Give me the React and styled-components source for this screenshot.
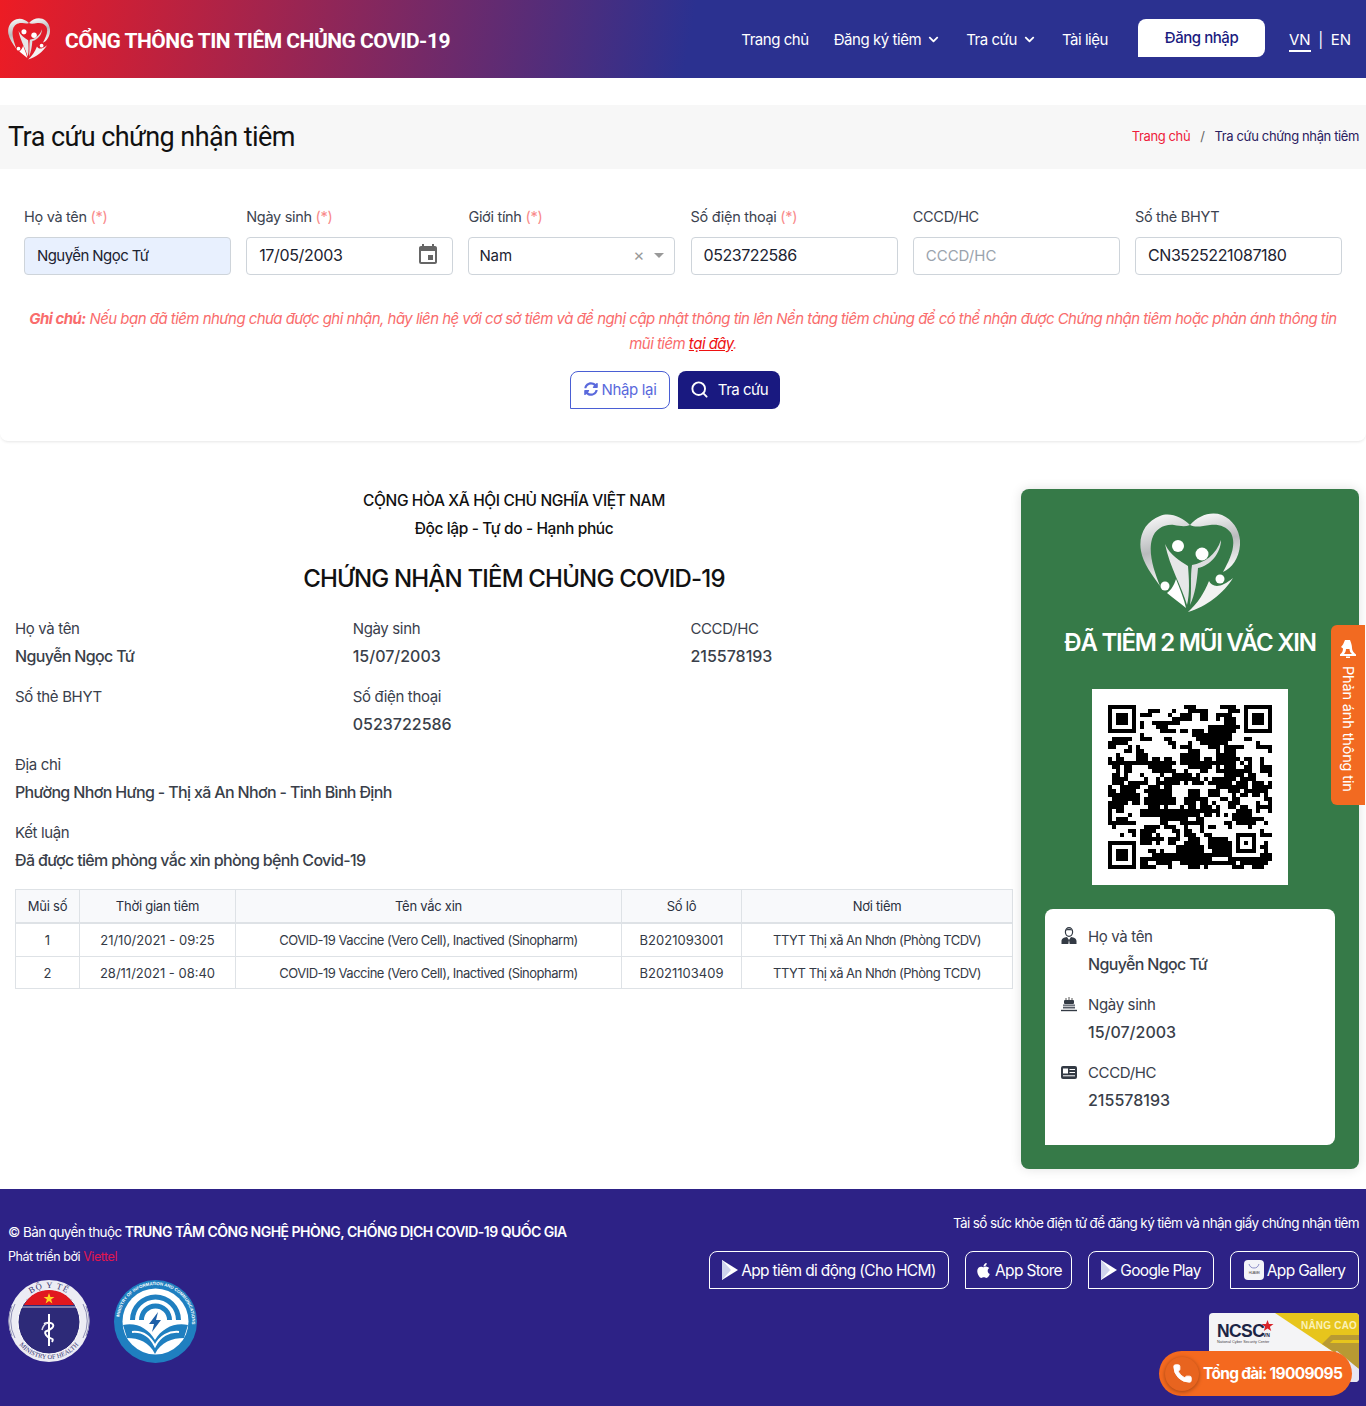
import { useMemo } from "react";
import styled, { createGlobalStyle } from "styled-components";
import { FaChevronDown, FaApple, FaSyncAlt } from "react-icons/fa";
import { MdEvent } from "react-icons/md";
import { Search, Phone } from "lucide-react";

const GlobalStyle = createGlobalStyle`
  html, body { margin: 0; padding: 0; background: #fff; }
  body { font-family: Inter, "Liberation Sans", sans-serif; color: #212529; }
  * { box-sizing: border-box; }
`;

const Page = styled.div`
  width: 1366px;
  min-height: 1406px;
`;

/* header */
const Header = styled.header`
  height: 78px;
  display: flex;
  align-items: center;
  justify-content: space-between;
  padding: 0 15px 0 8px;
  background: linear-gradient(100deg, #ed1c24 0%, #2b3190 50.5%, #2b3190 100%);
  color: #fff;
`;

const Brand = styled.div`
  display: flex;
  align-items: center;
  gap: 15px;
  font-family: Roboto, sans-serif;
  font-weight: 700;
  font-size: 21px;
  letter-spacing: -0.5px;
`;

const BrandName = styled.span`
  padding-top: 3px;
`;

const Nav = styled.nav`
  display: flex;
  align-items: center;
  font-size: 15px;
  letter-spacing: -0.45px;
`;

const NavItem = styled.a`
  display: flex;
  align-items: center;
  gap: 7px;
  margin-right: ${(p) => p.$gap}px;
  white-space: nowrap;
`;

const LoginButton = styled.button`
  width: 127px;
  height: 38px;
  margin: 0 24px 2px 0;
  border: 0;
  border-radius: 8px 8px 8px 0;
  background: #fff;
  color: #1b1b80;
  font: 500 15px Inter, sans-serif;
  letter-spacing: -0.45px;
  padding-bottom: 3px;
`;

const Lang = styled.div`
  display: flex;
  gap: 7.5px;
  font-size: 15px;
  letter-spacing: 0;
  align-items: center;
`;

const LangActive = styled.span`
  border-bottom: 2px solid #fff;
  padding-bottom: 1px;
  margin-top: 3px;
`;

/* breadcrumb bar */
const TitleBar = styled.div`
  margin-top: 27px;
  height: 64px;
  background: #f7f7f7;
  display: flex;
  align-items: center;
  justify-content: space-between;
  padding: 0 7px 0 8px;
`;

const PageTitle = styled.h1`
  margin: 0;
  font-family: Roboto, sans-serif;
  font-weight: 400;
  font-size: 27px;
  letter-spacing: -0.55px;
  color: #111;
`;

const Crumbs = styled.div`
  display: flex;
  gap: 10px;
  padding-bottom: 2px;
  font-size: 13px;
  letter-spacing: -0.38px;
  color: #2a2060;
`;

const CrumbLink = styled.a`
  color: #ee1c3a;
`;

const CrumbSep = styled.span`
  color: #666;
`;

/* search form */
const FormCard = styled.section`
  padding: 37px 24px 32px;
  background: #fff;
  border-radius: 0 0 8px 8px;
  box-shadow: 0 2px 3px -1px rgba(0, 0, 0, 0.1);
`;

const FieldGrid = styled.div`
  display: grid;
  grid-template-columns: repeat(6, 207px);
  column-gap: 15.2px;
`;

const FieldLabel = styled.label`
  display: block;
  height: 22px;
  line-height: 22px;
  margin-bottom: 9px;
  font-size: 14.5px;
  letter-spacing: -0.3px;
  color: #3c4350;
`;

const Required = styled.span`
  color: #f98a8a;
`;

const InputBox = styled.div`
  height: 38px;
  display: flex;
  align-items: center;
  justify-content: space-between;
  padding: 0 ${(p) => (p.$select ? 10 : 12)}px 2px;
  border: 1px solid #ced4da;
  border-radius: 4px;
  background: ${(p) => (p.$filled ? "#e8f0fe" : "#fff")};
  font-size: ${(p) => p.$size}px;
  letter-spacing: ${(p) => p.$ls}px;
  color: ${(p) => (p.$muted ? "#9aa3ad" : "#1c2230")};
`;

const SelectControls = styled.div`
  display: flex;
  align-items: center;
  gap: 10px;
  color: #999;
  font-size: 17px;
`;

const Caret = styled.span`
  width: 0;
  height: 0;
  border-left: 5px solid transparent;
  border-right: 5px solid transparent;
  border-top: 5px solid #999;
`;

const Note = styled.p`
  margin: 31px 0 15px;
  font-style: italic;
  font-size: 15px;
  line-height: 25px;
  letter-spacing: -0.54px;
  text-align: center;
  color: #f96c6c;
`;

const NoteLink = styled.a`
  color: #ee1111;
  text-decoration: underline;
`;

const FormActions = styled.div`
  display: flex;
  justify-content: center;
  gap: 8px;
  padding-right: 16px;
`;

const ResetButton = styled.button`
  width: 100px;
  height: 38px;
  display: flex;
  align-items: center;
  justify-content: center;
  gap: 4px;
  padding: 0 0 2px;
  background: #fff;
  border: 1px solid #4a5ed4;
  border-radius: 8px 8px 8px 0;
  color: #5a69dc;
  font: 400 15px Inter, sans-serif;
  letter-spacing: -0.35px;
`;

const SubmitButton = styled.button`
  width: 102px;
  height: 38px;
  display: flex;
  align-items: center;
  justify-content: center;
  gap: 9px;
  padding: 0 0 2px;
  background: #191980;
  border: 0;
  border-radius: 8px 8px 8px 0;
  color: #fff;
  font: 400 15px Inter, sans-serif;
  letter-spacing: -0.5px;
`;

/* certificate */
const Main = styled.main`
  display: flex;
  align-items: flex-start;
  padding-top: 45px;
`;

const Certificate = styled.div`
  width: 1021px;
  padding: 0 8px 0 15px;
`;

const Motto = styled.div`
  height: 28px;
  line-height: 30px;
  font-size: 15.5px;
  font-weight: 500;
  letter-spacing: -0.38px;
  text-align: center;
  color: #111;
`;

const CertTitle = styled.h2`
  height: 40px;
  margin: 16px 0;
  line-height: 42px;
  font-size: 24px;
  font-weight: 500;
  letter-spacing: -0.82px;
  text-align: center;
  color: #111;
`;

const CertGrid = styled.div`
  display: grid;
  grid-template-columns: repeat(3, 337.7px);
  row-gap: 12px;
`;

const CertField = styled.div`
  grid-column: ${(p) => (p.$wide ? "1 / -1" : "auto")};
`;

const InfoLabel = styled.div`
  height: 28px;
  line-height: 30px;
  font-size: 15px;
  letter-spacing: -0.35px;
  color: #3a404c;
`;

const InfoValue = styled.div`
  line-height: 28px;
  min-height: 28px;
  font-size: 16px;
  font-weight: 500;
  letter-spacing: ${(p) => (p.$num ? "0" : "-0.65px")};
  color: #3a3f4a;
`;

const DoseTable = styled.table`
  width: 997px;
  margin-top: 15px;
  border-collapse: collapse;
  table-layout: fixed;
  font-size: 13px;
  color: #343a46;
  text-align: center;
`;

const HeadCell = styled.th`
  height: 33px;
  width: ${(p) => p.$w}px;
  border: 1px solid #dee2e6;
  border-bottom: 2px solid #dee2e6;
  background: #f8f9fb;
  font-weight: 400;
  letter-spacing: -0.25px;
  color: #2b3040;
`;

const BodyCell = styled.td`
  height: 33px;
  border: 1px solid #dee2e6;
  padding: 0;
  letter-spacing: ${(p) => (p.$num ? "0" : "-0.5px")};
  tr:first-child & {
    height: 34px;
  }
  tr:last-child & {
    height: 32px;
  }
`;

/* green summary panel */
const Panel = styled.aside`
  width: 338px;
  height: 680px;
  margin-top: 3px;
  padding: 24px;
  display: flex;
  flex-direction: column;
  align-items: center;
  border-radius: 8px;
  background: #367a48;
  box-shadow: 0 0 12px rgba(0, 0, 0, 0.12);
  color: #fff;
`;

const PanelTitle = styled.h3`
  margin: 13px 0 29px;
  line-height: 34px;
  font-size: 24px;
  font-weight: 600;
  letter-spacing: -1.25px;
  white-space: nowrap;
`;

const QrFrame = styled.div`
  width: 196px;
  height: 196px;
  padding: 16px;
  background: #fff;
`;

const PersonCard = styled.div`
  width: 290px;
  margin-top: 24px;
  padding: 13px 16px 31px;
  display: flex;
  flex-direction: column;
  gap: 12px;
  border-radius: 8px 8px 8px 0;
  background: #fff;
`;

const PersonRow = styled.div`
  display: grid;
  grid-template-columns: 16px 1fr;
  column-gap: 11px;
`;

const PersonIcon = styled.div`
  height: 28px;
  display: flex;
  align-items: center;
  justify-content: center;
  color: #333a44;
`;

/* footer */
const Footer = styled.footer`
  margin-top: 20px;
  height: 217px;
  padding: 24px 7px 0 8px;
  display: flex;
  justify-content: space-between;
  background: #2d2286;
  color: #fff;
`;

const FooterLeft = styled.div`
  padding-top: 9px;
`;

const Copyright = styled.div`
  line-height: 20px;
  font-size: 13.5px;
  letter-spacing: -0.6px;
`;

const CopyrightOrg = styled.b`
  font-size: 14px;
  font-weight: 600;
  letter-spacing: -0.52px;
`;

const DevLine = styled.div`
  margin-top: 5px;
  line-height: 20px;
  font-size: 12.5px;
  letter-spacing: -0.45px;
`;

const DevLink = styled.span`
  color: #e2154f;
`;

const AgencyLogos = styled.div`
  display: flex;
  gap: 24px;
  margin-top: 13px;
`;

const FooterRight = styled.div`
  display: flex;
  flex-direction: column;
  align-items: flex-end;
`;

const AppText = styled.div`
  line-height: 20px;
  font-size: 13.5px;
  letter-spacing: -0.63px;
`;

const AppButtons = styled.div`
  display: flex;
  gap: 16px;
  margin-top: 18px;
`;

const AppButton = styled.a`
  width: ${(p) => p.$w}px;
  height: 38px;
  display: flex;
  align-items: center;
  justify-content: center;
  gap: 3px;
  border: 1px solid #fff;
  border-radius: 8px 8px 8px 0;
  font-size: 15.5px;
  letter-spacing: -0.65px;
  white-space: nowrap;
`;

const NcscBadge = styled.div`
  width: 150px;
  height: 69px;
  margin-top: 24px;
  overflow: hidden;
  border-radius: 4px;
`;

/* floating things */
const FeedbackTab = styled.div`
  position: absolute;
  right: 1px;
  top: 625px;
  width: 34px;
  height: 180px;
  display: flex;
  flex-direction: column;
  align-items: center;
  padding-top: 15px;
  gap: 8px;
  border-radius: 6px 0 0 6px;
  background: #f26a21;
  color: #fff;
`;

const FeedbackText = styled.span`
  writing-mode: vertical-rl;
  font-size: 14.5px;
  letter-spacing: -0.15px;
  white-space: nowrap;
`;

const HotlinePill = styled.div`
  position: absolute;
  left: 1159px;
  top: 1351px;
  width: 193px;
  height: 45px;
  display: flex;
  align-items: center;
  gap: 4px;
  padding-left: 6px;
  border-radius: 23px;
  background: #f4691f;
  color: #fff;
  font-size: 15.5px;
  font-weight: 700;
  letter-spacing: -0.7px;
  white-space: nowrap;
`;

const PhoneCircle = styled.span`
  width: 34px;
  height: 34px;
  display: flex;
  align-items: center;
  justify-content: center;
  border-radius: 50%;
  background: #e8641f;
  box-shadow: 0 1px 4px rgba(0, 0, 0, 0.35);
`;

const fields = [
  { label: "Họ và tên", req: true, value: "Nguyễn Ngọc Tứ", filled: true, size: 15, ls: -0.57 },
  { label: "Ngày sinh", req: true, value: "17/05/2003", date: true, size: 16, ls: -0.35 },
  { label: "Giới tính", req: true, value: "Nam", select: true, size: 15, ls: -0.1 },
  { label: "Số điện thoại", req: true, value: "0523722586", size: 16, ls: -0.45 },
  { label: "CCCD/HC", value: "CCCD/HC", muted: true, size: 15, ls: 0 },
  { label: "Số thẻ BHYT", value: "CN3525221087180", size: 16, ls: -0.4 },
];

const doses = [
  ["1", "21/10/2021 - 09:25", "COVID-19 Vaccine (Vero Cell), Inactived (Sinopharm)", "B2021093001", "TTYT Thị xã An Nhơn (Phòng TCDV)"],
  ["2", "28/11/2021 - 08:40", "COVID-19 Vaccine (Vero Cell), Inactived (Sinopharm)", "B2021103409", "TTYT Thị xã An Nhơn (Phòng TCDV)"],
];

const HeartLogo = ({ size, id }) => (
  <svg width={size} height={size} viewBox="0 0 100 100">
    <defs>
      <linearGradient id={id} x1="0" y1="0" x2="0.2" y2="1">
        <stop offset="0" stopColor="#ffffff" />
        <stop offset="0.55" stopColor="#b9bbbd" />
        <stop offset="1" stopColor="#f2f2f2" />
      </linearGradient>
    </defs>
    <path fill={`url(#${id})`} d="M50 12C42 4 30-1 20 3C6 8-2 22 1 38C3 50 12 62 20 73C14 58 8 40 12 26C15 16 24 11 34 12C40 13 45 14 50 12Z" />
    <path fill={`url(#${id})`} d="M50 12C58 3 70-2 82 2C94 7 101 20 100 32C99 45 92 55 83 59C90 46 97 32 91 20C86 13 78 11 70 12C62 13 56 15 50 12Z" />
    <path fill="#e6e7e8" d="M25 31C30 42 40 48 48 53C49 66 50 80 47 92C42 74 30 55 25 31Z" />
    <path fill="#dcdddf" d="M81 27C81 40 70 53 58 55C57 68 55 82 50 92C52 76 50 64 52 52C64 50 76 42 81 27Z" />
    <path fill="#ffffff" d="M27 80C32 76 34 72 36 66C40 76 44 86 46 95C40 90 33 85 27 80Z" />
    <path fill="#f2f2f2" d="M93 65C84 80 66 94 48 99C58 90 64 80 69 68C72 74 80 76 93 65Z" />
    <circle cx="38" cy="33" r="6" fill="#fff" />
    <circle cx="62" cy="41" r="6.5" fill="#fff" />
    <circle cx="25" cy="73" r="4.5" fill="#fff" />
    <circle cx="80" cy="66" r="4.5" fill="#fff" />
  </svg>
);

// not a real code, just the same look: finder squares plus seeded noise
const QrCode = () => {
  const path = useMemo(() => {
    const n = 41;
    let seed = 20031507;
    const next = () => {
      seed = (seed * 1664525 + 1013904223) % 4294967296;
      return seed / 4294967296;
    };
    const grid = [];
    for (let y = 0; y < n; y++) {
      const row = [];
      for (let x = 0; x < n; x++) {
        // copy a neighbour now and then, so the modules clump like the real thing
        const r = next();
        if (x > 0 && r < 0.3) row.push(row[x - 1]);
        else if (y > 0 && r < 0.5) row.push(grid[y - 1][x]);
        else row.push(next() > 0.48);
      }
      grid.push(row);
    }
    const stamp = (ox, oy, size) => {
      for (let y = -1; y <= size; y++) {
        for (let x = -1; x <= size; x++) {
          const gx = ox + x;
          const gy = oy + y;
          if (gx < 0 || gy < 0 || gx >= n || gy >= n) continue;
          const edge = Math.min(x, y, size - 1 - x, size - 1 - y);
          grid[gy][gx] = edge === 0 || edge >= 2;
          if (size === 5) grid[gy][gx] = edge === 0 || edge === 2;
        }
      }
    };
    stamp(0, 0, 7);
    stamp(n - 7, 0, 7);
    stamp(0, n - 7, 7);
    stamp(n - 9, n - 9, 5);
    let d = "";
    grid.forEach((row, y) => row.forEach((on, x) => {
      if (on) d += `M${x} ${y}h1v1h-1z`;
    }));
    return d;
  }, []);
  return (
    <svg width="164" height="164" viewBox="0 0 41 41" shapeRendering="crispEdges">
      <path d={path} fill="#000" />
    </svg>
  );
};

const BellIcon = () => (
  <svg width="18" height="18" viewBox="0 0 18 18">
    <path
      fill="#fff"
      fillRule="evenodd"
      d="M6 0H11C12 3 13 5 13 8C13 11 15 13 17 14.500V16H1V14.500C3 13 4 11 4 8.500L2 7L4 4.500ZM7 9C7 11 6 13 5 14H13C11.500 13 10.500 11 10.500 9Z"
    />
    <rect x="7" y="16.500" width="4" height="1.500" fill="#fff" />
  </svg>
);

const PlayIcon = () => (
  <svg width="16" height="20" viewBox="0 0 16 20">
    <path d="M0 0L16 10L0 20Z" fill="#fff" />
    <path d="M0 0L9 10L0 20Z" fill="#cfd3ec" />
  </svg>
);

const HuaweiIcon = () => (
  <svg width="20" height="20" viewBox="0 0 20 20">
    <rect width="20" height="20" rx="4" fill="#f3f3f8" />
    <path d="M5 4c1 3 2.500 4 5 4s4-1 5-4" fill="none" stroke="#8d8fc8" strokeWidth="1" />
    <text x="10" y="14" textAnchor="middle" fontSize="3.600" fontFamily="Liberation Sans" fill="#555">HUAWEI</text>
  </svg>
);

const UserIcon = () => (
  <svg width="16" height="18" viewBox="0 0 16 18">
    <ellipse cx="8" cy="5" rx="3.600" ry="4.300" fill="#fff" stroke="#333a44" strokeWidth="1.200" />
    <path d="M4.500 3.500C6 1 10 1 11.500 3.500C9.500 3 6.500 3 4.500 3.500Z" fill="#333a44" />
    <path d="M0.500 17V14C0.500 11.500 3 10.500 6 10L8 13L10 10C13 10.500 15.500 11.500 15.500 14V17Z" fill="#333a44" />
    <path d="M8 13L7.300 17H8.700Z" fill="#fff" />
  </svg>
);

const CakeIcon = () => (
  <svg width="16" height="16" viewBox="0 0 16 16">
    <path d="M5 4V2M8 4V1M11 4V2" stroke="#555" strokeWidth="1" />
    <rect x="3" y="4" width="10" height="4" rx="1" fill="#333a44" />
    <rect x="2" y="8.500" width="12" height="4" fill="#555b66" />
    <path d="M2 10.300H14" stroke="#fff" strokeWidth="0.800" />
    <path d="M0 14.500H16" stroke="#333a44" strokeWidth="1.400" />
  </svg>
);

const IdIcon = () => (
  <svg width="16" height="13" viewBox="0 0 16 13">
    <rect width="16" height="13" rx="2" fill="#333a44" />
    <rect x="2" y="2.500" width="5" height="5" fill="#fff" />
    <path d="M8.500 3.500H14M8.500 6.500H14M2 9.800H14" stroke="#fff" strokeWidth="1" />
  </svg>
);

const HealthMinistryLogo = () => (
  <svg width="82" height="82" viewBox="0 0 82 82">
    <defs>
      <path id="moh-top" d="M8 41a33 33 0 0 1 66 0" />
      <path id="moh-bottom" d="M3 41a38 38 0 0 0 76 0" />
    </defs>
    <ellipse cx="41" cy="41" rx="40.500" ry="41" fill="#ececf4" />
    <path d="M4 26a38 38 0 0 0 0 30M78 26a38 38 0 0 1 0 30M7 24a36 36 0 0 0 0 34M75 24a36 36 0 0 1 0 34" fill="none" stroke="#8f90b5" strokeWidth="1" />
    <text fontSize="8.500" fontFamily="Liberation Serif" fill="#33336e" letterSpacing="1" textAnchor="middle">
      <textPath href="#moh-top" startOffset="50%">BỘ Y TẾ</textPath>
    </text>
    <ellipse cx="41" cy="42" rx="31" ry="32" fill="#2d2a78" stroke="#fff" strokeWidth="1" />
    <path d="M16 25C21 15 31 10 41 10C51 10 61 15 66 25Z" fill="#e1181f" />
    <path d="M41 13l1.400 4h4l-3.300 2.500 1.300 4-3.400-2.500-3.400 2.500 1.300-4-3.300-2.500h4z" fill="#ffd21f" />
    <path d="M14 27H68" stroke="#c9c9de" strokeWidth="1" />
    <path d="M41 34V66" stroke="#fff" strokeWidth="2" />
    <path d="M36 44c6-3 12 0 8 4s-9 2-6 7 9 2 6 7" fill="none" stroke="#fff" strokeWidth="2" />
    <path d="M34 50c1-4 3-6 5-7" stroke="#d9d9e8" strokeWidth="1.500" fill="none" />
    <text fontSize="6.500" fontFamily="Liberation Serif" fill="#33336e" textAnchor="middle">
      <textPath href="#moh-bottom" startOffset="50%">MINISTRY OF HEALTH</textPath>
    </text>
  </svg>
);

const InfoMinistryLogo = () => (
  <svg width="83" height="83" viewBox="0 0 83 83">
    <defs>
      <path id="mic-ring" d="M5 41.500a36.500 36.500 0 1 1 73 0a36.500 36.500 0 1 1-73 0" />
    </defs>
    <circle cx="41.500" cy="41.500" r="41.500" fill="#1f7fc0" />
    <text fontSize="4.400" fontWeight="700" fontFamily="Liberation Sans" fill="#fff">
      <textPath href="#mic-ring" startOffset="2%">MINISTRY OF INFORMATION AND COMMUNICATIONS</textPath>
    </text>
    <circle cx="41.500" cy="41.500" r="33" fill="#fff" />
    <path d="M16 40a25.500 25.500 0 0 1 51 0h-5a20.500 20.500 0 0 0-41 0z" fill="#1f7fc0" />
    <path d="M25 40a16.500 16.500 0 0 1 33 0h-5a11.500 11.500 0 0 0-23 0z" fill="#1f7fc0" />
    <path d="M44 32L35 44h5l-2 8 9-12h-5z" fill="#1d5fa8" />
    <path d="M9 45C22 42 34 48 41 60C48 48 61 42 74 45L70 58C58 58 47 62 41 74C35 62 25 58 13 58Z" fill="#1f7fc0" />
    <path d="M18 52C28 51 36 56 41 66C46 56 55 51 65 52" fill="none" stroke="#fff" strokeWidth="2" />
  </svg>
);

const NcscLogo = () => (
  <svg width="150" height="69" viewBox="0 0 150 69">
    <rect width="150" height="69" fill="#f4f4f6" />
    <path d="M66 0H150V56Z" fill="#e7c51c" />
    <path d="M113 31L122 22H150V56Z" fill="#b89a33" />
    <path d="M124 27H150V30H121Z" fill="#e7c51c" />
    <path d="M100 55L128 38L150 56V69H100Z" fill="#e6e7f3" />
    <text x="8" y="24" fontSize="17.500" fontWeight="700" fontFamily="Liberation Sans" fill="#1c2545" letterSpacing="-0.6">NCSC</text>
    <path d="M58.500 7l1.500 4h4.500l-3.600 2.700 1.300 4.300-3.700-2.600-3.700 2.600 1.300-4.300-3.600-2.700h4.500z" fill="#d8232a" />
    <text x="54" y="24" fontSize="5" fontWeight="700" fontFamily="Liberation Sans" fill="#1c2545">VN</text>
    <text x="8" y="30" fontSize="3.800" fontFamily="Liberation Sans" fill="#444">National Cyber Security Center</text>
    <text x="92" y="16" fontSize="10" fontWeight="700" fontFamily="Liberation Sans" fill="#fbf1b8" letterSpacing="0.2">NÂNG CAO</text>
  </svg>
);

const App = () => {
  return (
    <Page>
      <GlobalStyle />
      <Header>
        <Brand>
          <HeartLogo size={42} id="brand-heart" />
          <BrandName>CỔNG THÔNG TIN TIÊM CHỦNG COVID-19</BrandName>
        </Brand>
        <Nav>
          <NavItem $gap={25}>Trang chủ</NavItem>
          <NavItem $gap={27}>Đăng ký tiêm <FaChevronDown size={11} /></NavItem>
          <NavItem $gap={27}>Tra cứu <FaChevronDown size={11} /></NavItem>
          <NavItem $gap={30}>Tài liệu</NavItem>
          <LoginButton>Đăng nhập</LoginButton>
          <Lang>
            <LangActive>VN</LangActive>
            <span>|</span>
            <span>EN</span>
          </Lang>
        </Nav>
      </Header>

      <TitleBar>
        <PageTitle>Tra cứu chứng nhận tiêm</PageTitle>
        <Crumbs>
          <CrumbLink>Trang chủ</CrumbLink>
          <CrumbSep>/</CrumbSep>
          <span>Tra cứu chứng nhận tiêm</span>
        </Crumbs>
      </TitleBar>

      <FormCard>
        <FieldGrid>
          {fields.map((f) => (
            <div key={f.label}>
              <FieldLabel>
                {f.label} {f.req && <Required>(*)</Required>}
              </FieldLabel>
              <InputBox $filled={f.filled} $muted={f.muted} $select={f.select} $size={f.size} $ls={f.ls}>
                <span>{f.value}</span>
                {f.date && <MdEvent size={24} color="#666" />}
                {f.select && (
                  <SelectControls>
                    <span>×</span>
                    <Caret />
                  </SelectControls>
                )}
              </InputBox>
            </div>
          ))}
        </FieldGrid>
        <Note>
          <b>Ghi chú:</b> Nếu bạn đã tiêm nhưng chưa được ghi nhận, hãy liên hệ với cơ sở tiêm và đề nghị cập nhật thông tin lên Nền tảng tiêm chủng để có thể nhận được Chứng nhận tiêm hoặc phản ánh thông tin
          <br />
          mũi tiêm <NoteLink>tại đây</NoteLink>.
        </Note>
        <FormActions>
          <ResetButton><FaSyncAlt size={14} /> Nhập lại</ResetButton>
          <SubmitButton><Search size={19} strokeWidth={2.4} /> Tra cứu</SubmitButton>
        </FormActions>
      </FormCard>

      <Main>
        <Certificate>
          <Motto>CỘNG HÒA XÃ HỘI CHỦ NGHĨA VIỆT NAM</Motto>
          <Motto>Độc lập - Tự do - Hạnh phúc</Motto>
          <CertTitle>CHỨNG NHẬN TIÊM CHỦNG COVID-19</CertTitle>
          <CertGrid>
            <CertField>
              <InfoLabel>Họ và tên</InfoLabel>
              <InfoValue>Nguyễn Ngọc Tứ</InfoValue>
            </CertField>
            <CertField>
              <InfoLabel>Ngày sinh</InfoLabel>
              <InfoValue $num>15/07/2003</InfoValue>
            </CertField>
            <CertField>
              <InfoLabel>CCCD/HC</InfoLabel>
              <InfoValue $num>215578193</InfoValue>
            </CertField>
            <CertField>
              <InfoLabel>Số thẻ BHYT</InfoLabel>
              <InfoValue />
            </CertField>
            <CertField>
              <InfoLabel>Số điện thoại</InfoLabel>
              <InfoValue $num>0523722586</InfoValue>
            </CertField>
            <CertField />
            <CertField $wide>
              <InfoLabel>Địa chỉ</InfoLabel>
              <InfoValue>Phường Nhơn Hưng - Thị xã An Nhơn - Tỉnh Bình Định</InfoValue>
            </CertField>
            <CertField $wide>
              <InfoLabel>Kết luận</InfoLabel>
              <InfoValue>Đã được tiêm phòng vắc xin phòng bệnh Covid-19</InfoValue>
            </CertField>
          </CertGrid>
          <DoseTable>
            <thead>
              <tr>
                <HeadCell $w={64}>Mũi số</HeadCell>
                <HeadCell $w={156}>Thời gian tiêm</HeadCell>
                <HeadCell $w={386}>Tên vắc xin</HeadCell>
                <HeadCell $w={120}>Số lô</HeadCell>
                <HeadCell $w={271}>Nơi tiêm</HeadCell>
              </tr>
            </thead>
            <tbody>
              {doses.map((row) => (
                <tr key={row[0]}>
                  <BodyCell $num>{row[0]}</BodyCell>
                  <BodyCell $num>{row[1]}</BodyCell>
                  <BodyCell>{row[2]}</BodyCell>
                  <BodyCell $num>{row[3]}</BodyCell>
                  <BodyCell>{row[4]}</BodyCell>
                </tr>
              ))}
            </tbody>
          </DoseTable>
        </Certificate>

        <Panel>
          <HeartLogo size={100} id="panel-heart" />
          <PanelTitle>ĐÃ TIÊM 2 MŨI VẮC XIN</PanelTitle>
          <QrFrame><QrCode /></QrFrame>
          <PersonCard>
            <PersonRow>
              <PersonIcon><UserIcon /></PersonIcon>
              <InfoLabel>Họ và tên</InfoLabel>
              <span />
              <InfoValue>Nguyễn Ngọc Tứ</InfoValue>
            </PersonRow>
            <PersonRow>
              <PersonIcon><CakeIcon /></PersonIcon>
              <InfoLabel>Ngày sinh</InfoLabel>
              <span />
              <InfoValue $num>15/07/2003</InfoValue>
            </PersonRow>
            <PersonRow>
              <PersonIcon><IdIcon /></PersonIcon>
              <InfoLabel>CCCD/HC</InfoLabel>
              <span />
              <InfoValue $num>215578193</InfoValue>
            </PersonRow>
          </PersonCard>
        </Panel>
      </Main>

      <Footer>
        <FooterLeft>
          <Copyright>© Bản quyền thuộc <CopyrightOrg>TRUNG TÂM CÔNG NGHỆ PHÒNG, CHỐNG DỊCH COVID-19 QUỐC GIA</CopyrightOrg></Copyright>
          <DevLine>Phát triển bởi <DevLink>Viettel</DevLink></DevLine>
          <AgencyLogos>
            <HealthMinistryLogo />
            <InfoMinistryLogo />
          </AgencyLogos>
        </FooterLeft>
        <FooterRight>
          <AppText>Tải sổ sức khỏe điện tử để đăng ký tiêm và nhận giấy chứng nhận tiêm</AppText>
          <AppButtons>
            <AppButton $w={240}><PlayIcon /> App tiêm di động (Cho HCM)</AppButton>
            <AppButton $w={107}><FaApple size={17} /> App Store</AppButton>
            <AppButton $w={126}><PlayIcon /> Google Play</AppButton>
            <AppButton $w={129}><HuaweiIcon /> App Gallery</AppButton>
          </AppButtons>
          <NcscBadge><NcscLogo /></NcscBadge>
        </FooterRight>
      </Footer>

      <FeedbackTab>
        <BellIcon />
        <FeedbackText>Phản ánh thông tin</FeedbackText>
      </FeedbackTab>

      <HotlinePill>
        <PhoneCircle><Phone size={21} fill="#fff" strokeWidth={1} /></PhoneCircle>
        Tổng đài: 19009095
      </HotlinePill>
    </Page>
  );
};

export default App;
